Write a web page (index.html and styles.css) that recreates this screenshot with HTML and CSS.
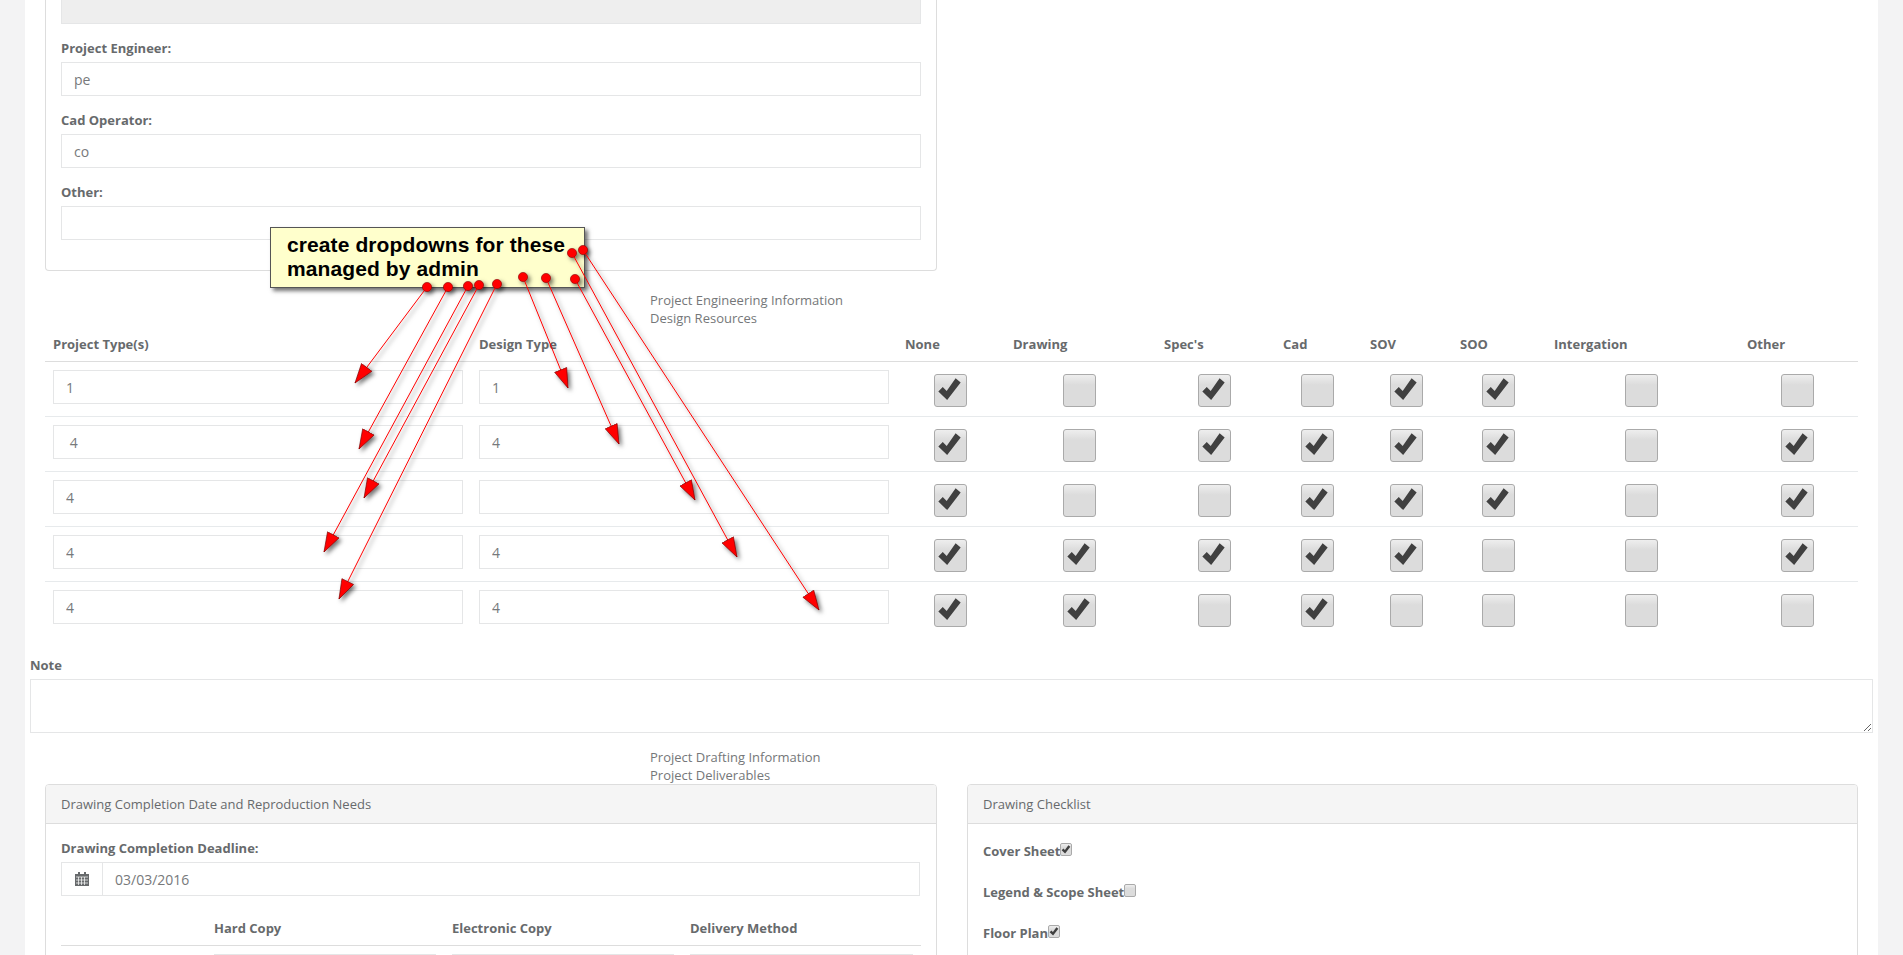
FILE: index.html
```html
<!DOCTYPE html>
<html lang="en">
<head>
<meta charset="utf-8">
<title>Project Information</title>
<link rel="stylesheet" href="styles.css">
</head>
<body>
<svg class="defs" width="0" height="0" aria-hidden="true">
  <defs>
    <symbol id="tick" viewBox="0 0 33 33"><path d="M4.6 18.6 9.3 13.9 13.5 18 23 4.6 28.4 9 14 27.8Z"/></symbol>
  </defs>
</svg>
<main class="page">
  <section class="panel panel-top">
    <div class="control control-disabled"></div>
    <div class="field">
      <label class="field-label">Project Engineer:</label>
      <input class="control" type="text" value="pe">
    </div>
    <div class="field">
      <label class="field-label">Cad Operator:</label>
      <input class="control" type="text" value="co">
    </div>
    <div class="field">
      <label class="field-label">Other:</label>
      <input class="control" type="text" value="">
    </div>
  </section>

  <div class="section-title section-title-eng">Project Engineering Information<br>Design Resources</div>

  <table class="eng-table">
    <colgroup>
      <col class="c426"><col class="c426"><col class="c108"><col class="c151"><col class="c119"><col class="c87"><col class="c90"><col class="c94"><col class="c193"><col class="c119">
    </colgroup>
    <thead>
      <tr><th>Project Type(s)</th><th>Design Type</th><th>None</th><th>Drawing</th><th>Spec's</th><th>Cad</th><th>SOV</th><th>SOO</th><th>Intergation</th><th>Other</th></tr>
    </thead>
    <tbody>
      <tr>
        <td><input class="control" type="text" value="1"></td>
        <td><input class="control" type="text" value="1"></td>
        <td class="cell-check"><span class="cb"><svg class="tick"><use href="#tick"/></svg></span></td>
        <td class="cell-check"><span class="cb"></span></td>
        <td class="cell-check"><span class="cb"><svg class="tick"><use href="#tick"/></svg></span></td>
        <td class="cell-check"><span class="cb"></span></td>
        <td class="cell-check"><span class="cb"><svg class="tick"><use href="#tick"/></svg></span></td>
        <td class="cell-check"><span class="cb"><svg class="tick"><use href="#tick"/></svg></span></td>
        <td class="cell-check"><span class="cb"></span></td>
        <td class="cell-check"><span class="cb"></span></td>
      </tr>
      <tr>
        <td><input class="control" type="text" value=" 4"></td>
        <td><input class="control" type="text" value="4"></td>
        <td class="cell-check"><span class="cb"><svg class="tick"><use href="#tick"/></svg></span></td>
        <td class="cell-check"><span class="cb"></span></td>
        <td class="cell-check"><span class="cb"><svg class="tick"><use href="#tick"/></svg></span></td>
        <td class="cell-check"><span class="cb"><svg class="tick"><use href="#tick"/></svg></span></td>
        <td class="cell-check"><span class="cb"><svg class="tick"><use href="#tick"/></svg></span></td>
        <td class="cell-check"><span class="cb"><svg class="tick"><use href="#tick"/></svg></span></td>
        <td class="cell-check"><span class="cb"></span></td>
        <td class="cell-check"><span class="cb"><svg class="tick"><use href="#tick"/></svg></span></td>
      </tr>
      <tr>
        <td><input class="control" type="text" value="4"></td>
        <td><input class="control" type="text" value=""></td>
        <td class="cell-check"><span class="cb"><svg class="tick"><use href="#tick"/></svg></span></td>
        <td class="cell-check"><span class="cb"></span></td>
        <td class="cell-check"><span class="cb"></span></td>
        <td class="cell-check"><span class="cb"><svg class="tick"><use href="#tick"/></svg></span></td>
        <td class="cell-check"><span class="cb"><svg class="tick"><use href="#tick"/></svg></span></td>
        <td class="cell-check"><span class="cb"><svg class="tick"><use href="#tick"/></svg></span></td>
        <td class="cell-check"><span class="cb"></span></td>
        <td class="cell-check"><span class="cb"><svg class="tick"><use href="#tick"/></svg></span></td>
      </tr>
      <tr>
        <td><input class="control" type="text" value="4"></td>
        <td><input class="control" type="text" value="4"></td>
        <td class="cell-check"><span class="cb"><svg class="tick"><use href="#tick"/></svg></span></td>
        <td class="cell-check"><span class="cb"><svg class="tick"><use href="#tick"/></svg></span></td>
        <td class="cell-check"><span class="cb"><svg class="tick"><use href="#tick"/></svg></span></td>
        <td class="cell-check"><span class="cb"><svg class="tick"><use href="#tick"/></svg></span></td>
        <td class="cell-check"><span class="cb"><svg class="tick"><use href="#tick"/></svg></span></td>
        <td class="cell-check"><span class="cb"></span></td>
        <td class="cell-check"><span class="cb"></span></td>
        <td class="cell-check"><span class="cb"><svg class="tick"><use href="#tick"/></svg></span></td>
      </tr>
      <tr>
        <td><input class="control" type="text" value="4"></td>
        <td><input class="control" type="text" value="4"></td>
        <td class="cell-check"><span class="cb"><svg class="tick"><use href="#tick"/></svg></span></td>
        <td class="cell-check"><span class="cb"><svg class="tick"><use href="#tick"/></svg></span></td>
        <td class="cell-check"><span class="cb"></span></td>
        <td class="cell-check"><span class="cb"><svg class="tick"><use href="#tick"/></svg></span></td>
        <td class="cell-check"><span class="cb"></span></td>
        <td class="cell-check"><span class="cb"></span></td>
        <td class="cell-check"><span class="cb"></span></td>
        <td class="cell-check"><span class="cb"></span></td>
      </tr>
    </tbody>
  </table>

  <div class="note">
    <label class="field-label note-label">Note</label>
    <textarea class="note-input"></textarea>
  </div>

  <div class="section-title section-title-draft">Project Drafting Information<br>Project Deliverables</div>

  <div class="panel-row">
    <section class="panel panel-left">
      <header class="panel-heading">Drawing Completion Date and Reproduction Needs</header>
      <div class="panel-body">
        <label class="field-label">Drawing Completion Deadline:</label>
        <div class="input-group">
          <span class="addon">
            <svg class="cal" width="14" height="14" viewBox="0 0 14 14" aria-hidden="true">
              <path class="cal-fill" d="M3 0h2v2h4V0h2v2h3v12H0V2h3Z"/>
              <path class="cal-grid" d="M1 5h12M1 8h12M1 11h12M3.5 5v8M6.5 5v8M9.5 5v8"/>
            </svg>
          </span>
          <input class="control control-joined" type="text" value="03/03/2016">
        </div>
        <table class="copy-table">
          <colgroup><col class="c145"><col class="c238"><col class="c238"><col class="c239"></colgroup>
          <thead><tr><th></th><th>Hard Copy</th><th>Electronic Copy</th><th>Delivery Method</th></tr></thead>
          <tbody>
            <tr>
              <td></td>
              <td><input class="control" type="text"></td>
              <td><input class="control" type="text"></td>
              <td><input class="control" type="text"></td>
            </tr>
          </tbody>
        </table>
      </div>
    </section>
    <section class="panel panel-right">
      <header class="panel-heading">Drawing Checklist</header>
      <div class="panel-body panel-body-check">
        <div class="check-item"><span class="check-text">Cover Sheet</span><span class="cb cb-small"><svg class="tick"><use href="#tick"/></svg></span></div>
        <div class="check-item"><span class="check-text">Legend &amp; Scope Sheet</span><span class="cb cb-small"></span></div>
        <div class="check-item"><span class="check-text">Floor Plan</span><span class="cb cb-small"><svg class="tick"><use href="#tick"/></svg></span></div>
      </div>
    </section>
  </div>
</main>

<div class="callout">create dropdowns for these<br>managed by admin</div>

<svg class="markup" width="1903" height="955" viewBox="0 0 1903 955" aria-hidden="true">
  <defs>
    <filter id="shade" x="-10%" y="-10%" width="120%" height="120%">
      <feDropShadow dx="2.5" dy="2.5" stdDeviation="2" flood-color="#000" flood-opacity=".55"/>
    </filter>
    <marker id="head" markerUnits="userSpaceOnUse" markerWidth="21" markerHeight="16" refX="20" refY="7.5" orient="auto">
      <path d="M.5 1 20 7.5.5 14Z" fill="#f00" stroke="#700" stroke-width=".6"/>
    </marker>
  </defs>
  <g filter="url(#shade)">
    <g class="arrow-lines">
      <line x1="427" y1="287" x2="355" y2="383" marker-end="url(#head)"/>
      <line x1="448" y1="287" x2="359" y2="449" marker-end="url(#head)"/>
      <line x1="479" y1="285" x2="364" y2="498" marker-end="url(#head)"/>
      <line x1="468" y1="286" x2="324" y2="552" marker-end="url(#head)"/>
      <line x1="497" y1="284" x2="339" y2="599" marker-end="url(#head)"/>
      <line x1="523" y1="277" x2="568" y2="388" marker-end="url(#head)"/>
      <line x1="546" y1="278" x2="619" y2="444" marker-end="url(#head)"/>
      <line x1="575" y1="279" x2="695" y2="500" marker-end="url(#head)"/>
      <line x1="572" y1="253" x2="737" y2="557" marker-end="url(#head)"/>
      <line x1="583" y1="250" x2="819" y2="610" marker-end="url(#head)"/>
    </g>
    <g class="arrow-dots">
      <circle cx="427" cy="287" r="4.6"/><circle cx="448" cy="287" r="4.6"/><circle cx="468" cy="286" r="4.6"/>
      <circle cx="479" cy="285" r="4.6"/><circle cx="497" cy="284" r="4.6"/><circle cx="523" cy="277" r="4.6"/>
      <circle cx="546" cy="278" r="4.6"/><circle cx="575" cy="279" r="4.6"/><circle cx="572" cy="253" r="4.6"/>
      <circle cx="583" cy="250" r="4.6"/>
    </g>
  </g>
</svg>
</body>
</html>
```

FILE: styles.css
```css
* { box-sizing: border-box; }

html, body {
  margin: 0;
  height: 955px;
  overflow: hidden;
}

body {
  background: #f3f3f4;
  color: #676a6c;
  font: 13px/18px "Open Sans", sans-serif;
  position: relative;
}

.defs { position: absolute; }

.page {
  margin: 0 25px;
  height: 955px;
  overflow: hidden;
  background: #fff;
}

.control {
  display: block;
  width: 100%;
  height: 34px;
  padding: 6px 12px;
  border: 1px solid #e5e6e7;
  background: #fff;
  color: #77797b;
  font: 400 14px/20px "Open Sans", sans-serif;
  outline: 0;
}

.control-disabled {
  height: 24px;
  background: #eee;
  border-top: 0;
}

.panel {
  background: #fff;
  border: 1px solid #ddd;
  border-radius: 4px;
}

.panel-top {
  width: 892px;
  margin-left: 20px;
  padding: 0 15px 30px;
  border-top: 0;
  border-radius: 0 0 4px 4px;
}

.field { margin-top: 15px; }

.field-label {
  display: block;
  margin-bottom: 5px;
  font-weight: 700;
}

.section-title {
  margin-left: 625px;
  color: #757779;
}
.section-title-eng { margin-top: 20px; }
.section-title-draft { margin-top: 15px; }

table {
  border-collapse: separate;
  border-spacing: 0;
  table-layout: fixed;
}

.eng-table {
  width: 1813px;
  margin-left: 20px;
}

.c426 { width: 426px; }
.c108 { width: 108px; }
.c151 { width: 151px; }
.c119 { width: 119px; }
.c87 { width: 87px; }
.c90 { width: 90px; }
.c94 { width: 94px; }
.c193 { width: 193px; }
.c145 { width: 145px; }
.c238 { width: 238px; }
.c239 { width: 239px; }

th {
  padding: 8px;
  border-bottom: 1px solid #ddd;
  text-align: left;
  font-weight: 700;
}

.eng-table td {
  height: 55px;
  padding: 8px;
  vertical-align: top;
  border-bottom: 1px solid #e7eaec;
}

.eng-table tr:last-child td { border-bottom: 0; }

.eng-table .cell-check {
  padding: 12px 2px 0 0;
  text-align: center;
}

.cb {
  display: inline-block;
  width: 33px;
  height: 33px;
  vertical-align: top;
  border: 1px solid #aaa;
  border-radius: 3px;
  background: linear-gradient(#eee, #dcdcdc 32%);
  overflow: hidden;
}

.tick {
  display: block;
  width: 100%;
  height: 100%;
  margin: -1px;
  fill: #404040;
}

.cb-small {
  width: 12px;
  height: 13px;
  border-radius: 2px;
}

.cb-small .tick {
  width: 12px;
  height: 13px;
}

.note { margin: 19px 0 0 5px; }

.note-input {
  display: block;
  width: 1843px;
  height: 54px;
  padding: 6px 12px;
  border: 1px solid #e5e6e7;
  background: #fff;
  color: #676a6c;
  font: inherit;
  outline: 0;
}

.panel-row {
  display: flex;
  gap: 30px;
  margin-left: 20px;
  width: 1813px;
}

.panel-left { width: 892px; }
.panel-right { width: 891px; }

.panel-heading {
  padding: 10px 15px;
  background: #f5f5f5;
  border-bottom: 1px solid #ddd;
  border-radius: 3px 3px 0 0;
}

.panel-body { padding: 15px; }

.input-group {
  display: flex;
  margin-right: 1px;
}

.addon {
  flex: none;
  display: flex;
  align-items: center;
  justify-content: center;
  width: 42px;
  height: 34px;
  border: 1px solid #e5e6e7;
}

.cal-fill { fill: #676a6c; }
.cal-grid { fill: none; stroke: #fff; stroke-width: .7; }

.control-joined { border-left: 0; }

.copy-table {
  width: 860px;
  margin-top: 15px;
}

.copy-table td { padding: 8px; }

.panel-body-check { padding-top: 19px; }

.check-item {
  display: flex;
  align-items: flex-start;
  height: 41px;
  font-weight: 700;
}

.check-text { margin-top: -1px; }

.callout {
  position: absolute;
  left: 270px;
  top: 227px;
  width: 315px;
  height: 61px;
  padding: 5px 0 0 16px;
  border: 1px solid #555;
  background: #ffc;
  box-shadow: 3px 3px 4px rgba(0, 0, 0, .55);
  color: #000;
  font: 700 21px/24px "Liberation Sans", Arial, sans-serif;
  letter-spacing: .1px;
}

.markup {
  position: absolute;
  left: 0;
  top: 0;
  pointer-events: none;
}

.arrow-lines line { stroke: #f00; stroke-width: 1; }
.arrow-dots circle { fill: #f00; stroke: #800; stroke-width: .6; }
```
